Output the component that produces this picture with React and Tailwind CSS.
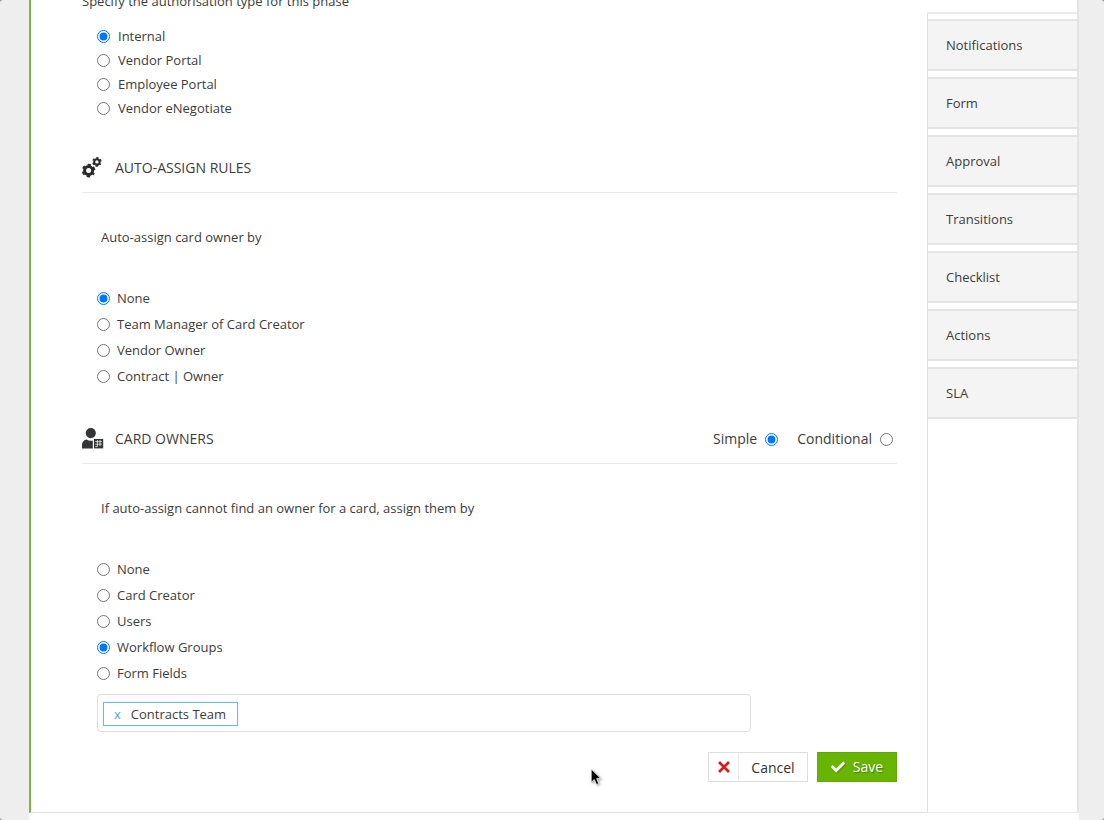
import React, { useState } from "react";
import { FaCheck } from "react-icons/fa";

const authTypes = ["Internal", "Vendor Portal", "Employee Portal", "Vendor eNegotiate"];
const assignRules = ["None", "Team Manager of Card Creator", "Vendor Owner", "Contract | Owner"];
const ownerTypes = ["None", "Card Creator", "Users", "Workflow Groups", "Form Fields"];
const tabs = ["Notifications", "Form", "Approval", "Transitions", "Checklist", "Actions", "SLA"];

function Radio({ name, label, checked, onChange, className }) {
  return (
    <label className={className}>
      <input
        type="radio"
        name={name}
        checked={checked}
        onChange={() => onChange(label)}
        className="w-[13px] h-[13px] shrink-0"
      />
      <span>{label}</span>
    </label>
  );
}

function RadioList({ name, options, initial, rowClass }) {
  const [value, setValue] = useState(initial);

  return (
    <div className="ml-[15px] flex flex-col items-start">
      {options.map((option) => (
        <Radio
          key={option}
          name={name}
          label={option}
          checked={value === option}
          onChange={setValue}
          className={rowClass}
        />
      ))}
    </div>
  );
}

function CogsIcon() {
  return (
    <svg viewBox="0 0 20 22" className="w-5 h-[22px]" fill="none" stroke="#2b2b2b">
      <circle cx="6.6" cy="13.6" r="4" strokeWidth="3" />
      <circle cx="6.6" cy="13.6" r="5.8" strokeWidth="2" strokeDasharray="3.2 2.874" strokeDashoffset="1.6" transform="rotate(30 6.6 13.6)" />
      <circle cx="14.9" cy="4.9" r="2.7" strokeWidth="2" />
      <circle cx="14.9" cy="4.9" r="4" strokeWidth="1.6" strokeDasharray="2.2 1.989" strokeDashoffset="1.1" transform="rotate(30 14.9 4.9)" />
    </svg>
  );
}

function OwnerIcon() {
  return (
    <svg viewBox="0 0 22 22" className="w-[22px] h-[22px]" fill="#333536">
      <circle cx="8.8" cy="5.1" r="5.1" />
      <path d="M0 20.400v-3.400C0 13.900 2 11.800 4.600 11.500c1.200.8 2.700 1.200 4.200 1.200.8 0 1.400-.1 2-.3v8z" />
      <rect x="12" y="11" width="9.200" height="9.400" />
      <path d="M13.200 13.600h6.800M13.200 16.200h6.800M15.400 12v6.200M18 12v6.200M13.200 18.600h2.600" stroke="#fff" strokeWidth=".7" />
    </svg>
  );
}

function SectionHeader({ icon, title, children }) {
  return (
    <div className="h-[49px] flex items-center border-b border-[#e8e8e8] text-sm leading-5">
      <span className="w-[33px]">{icon}</span>
      <h2>{title}</h2>
      {children}
    </div>
  );
}

export default function App() {
  const [mode, setMode] = useState("Simple");

  return (
    <div className="bg-[#8a8a8a]">
      <div className="relative min-h-screen overflow-hidden rounded-[3px] bg-[#eeeeee] pl-[29px] pr-[25px] flex flex-col font-['Open_Sans',sans-serif] text-[13px] leading-5 text-[#3c3c3c]">
        <div className="flex bg-white">
          <main className="flex-1 min-w-0 border-l-2 border-l-[#77b843] border-b border-b-[#dedede] pl-[51px] pr-[30px] pb-[30px]">
            <p className="-mt-[9px] mb-[13px]">Specify the authorisation type for this phase</p>
            <RadioList
              name="auth"
              options={authTypes}
              initial="Internal"
              rowClass="h-6 flex items-center gap-2"
            />

            <section className="mt-6">
              <SectionHeader icon={<CogsIcon />} title="AUTO-ASSIGN RULES" />
              <p className="ml-[19px] mt-[34px] mb-[38px]">Auto-assign card owner by</p>
              <RadioList
                name="assign"
                options={assignRules}
                initial="None"
                rowClass="h-[26px] flex items-center gap-[7px]"
              />
            </section>

            <section className="mt-[26px]">
              <SectionHeader icon={<OwnerIcon />} title="CARD OWNERS">
                <div className="ml-auto mr-1 flex gap-[19px]">
                  <Radio
                    name="mode"
                    label="Simple"
                    checked={mode === "Simple"}
                    onChange={setMode}
                    className="flex flex-row-reverse items-center gap-2"
                  />
                  <Radio
                    name="mode"
                    label="Conditional"
                    checked={mode === "Conditional"}
                    onChange={setMode}
                    className="flex flex-row-reverse items-center gap-2"
                  />
                </div>
              </SectionHeader>
              <p className="ml-[19px] mt-[34px] mb-[38px]">
                If auto-assign cannot find an owner for a card, assign them by
              </p>
              <RadioList
                name="owner"
                options={ownerTypes}
                initial="Workflow Groups"
                rowClass="h-[26px] flex items-center gap-[7px]"
              />

              {/* selected groups */}
              <div className="ml-[15px] mt-2 h-[38px] max-w-[654px] flex items-center gap-2 rounded-[4px] border border-[#dedede] px-[5px] pt-[2px]">
                <span className="h-6 flex items-center gap-[10px] border border-[#6fb7dc] pl-[10px] pr-[11px] shadow-[0_0_3px_#d8f3fb]">
                  <button type="button" aria-label="Remove Contracts Team" className="text-[#4aa9cf]">
                    x
                  </button>
                  Contracts Team
                </span>
                <input type="text" aria-label="Workflow groups" className="flex-1 min-w-0 outline-none" />
              </div>
            </section>

            <div className="mt-5 flex justify-end gap-[9px] text-sm leading-5">
              <button type="button" className="w-[100px] h-[30px] flex border border-[#dedede] text-[#333333]">
                <span className="w-[30px] h-full flex items-center justify-center border-r border-[#e8e8e8]">
                  <svg viewBox="0 0 12 12" className="w-3 h-3">
                    <path d="M2 2l8 8M10 2l-8 8" stroke="#d0211c" strokeWidth="2.8" strokeLinecap="square" />
                  </svg>
                </span>
                <span className="flex-1 h-full flex items-center justify-center pt-[2px]">Cancel</span>
              </button>
              <button
                type="button"
                className="w-20 h-[30px] flex items-center justify-center gap-2 bg-[#67b500] text-white border border-[#62a80a] [text-shadow:1px_1px_1px_#4a7d0c]"
              >
                <FaCheck className="w-[14px] h-[14px] drop-shadow-[1px_1px_0_#5b8f1d]" />
                Save
              </button>
            </div>
          </main>

          <aside className="w-[152px] shrink-0 flex flex-col border-r-2 border-r-[#e4e4e4] border-b border-b-[#ebebeb]">
            {/* bottom edge of the open tab */}
            <div className="h-[14px] shrink-0 border-b-2 border-[#ebebeb]" />
            <nav className="flex-1 flex flex-col gap-[6px] border-l border-[#dedede] pt-[5px]">
              {tabs.map((tab) => (
                <a
                  key={tab}
                  href="#"
                  className="h-[52px] flex items-center bg-[#f4f4f4] border-y-2 border-[#e4e4e4] pl-[18px]"
                >
                  {tab}
                </a>
              ))}
            </nav>
          </aside>
        </div>
        <div className="flex-1 bg-white" />

        {/* pointer */}
        <svg viewBox="0 0 12 18" className="absolute left-[590px] top-[768px] w-3 h-[18px] drop-shadow-[1px_1px_1px_#999999]">
          <path d="M1.200 1v13.400l3.100-2.900 2.100 5 2.400-1-2.100-4.900h4.200z" fill="#000" stroke="#fff" strokeWidth=".8" />
        </svg>
      </div>
    </div>
  );
}
